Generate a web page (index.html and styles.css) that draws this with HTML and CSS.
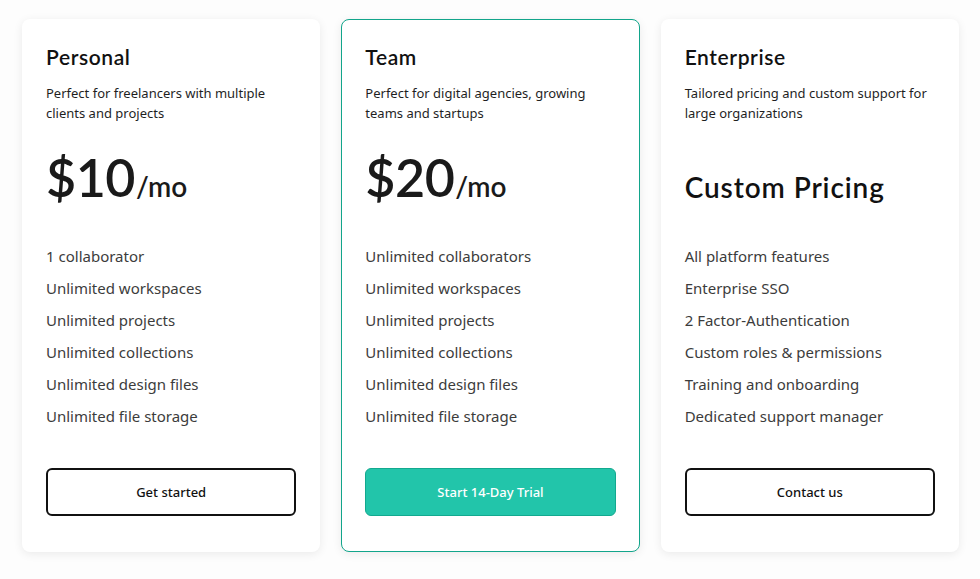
FILE: index.html
```html
<!DOCTYPE html>
<html lang="en">
<head>
<meta charset="utf-8">
<title>Pricing</title>
<link rel="stylesheet" href="styles.css">
</head>
<body>
<main class="pricing">
  <section class="card">
    <h2 class="plan-name">Personal</h2>
    <p class="plan-desc">Perfect for freelancers with multiple clients and projects</p>
    <div class="price"><span class="amount">$10</span><span class="period">/mo</span></div>
    <ul class="features">
      <li>1 collaborator</li>
      <li>Unlimited workspaces</li>
      <li>Unlimited projects</li>
      <li>Unlimited collections</li>
      <li>Unlimited design files</li>
      <li>Unlimited file storage</li>
    </ul>
    <button class="btn btn-outline">Get started</button>
  </section>
  <section class="card card-featured">
    <h2 class="plan-name">Team</h2>
    <p class="plan-desc">Perfect for digital agencies, growing teams and startups</p>
    <div class="price"><span class="amount">$20</span><span class="period">/mo</span></div>
    <ul class="features">
      <li>Unlimited collaborators</li>
      <li>Unlimited workspaces</li>
      <li>Unlimited projects</li>
      <li>Unlimited collections</li>
      <li>Unlimited design files</li>
      <li>Unlimited file storage</li>
    </ul>
    <button class="btn btn-primary">Start 14-Day Trial</button>
  </section>
  <section class="card">
    <h2 class="plan-name">Enterprise</h2>
    <p class="plan-desc">Tailored pricing and custom support for large organizations</p>
    <div class="price"><span class="custom">Custom Pricing</span></div>
    <ul class="features">
      <li>All platform features</li>
      <li>Enterprise SSO</li>
      <li>2 Factor-Authentication</li>
      <li>Custom roles &amp; permissions</li>
      <li>Training and onboarding</li>
      <li>Dedicated support manager</li>
    </ul>
    <button class="btn btn-outline">Contact us</button>
  </section>
</main>
</body>
</html>
```

FILE: styles.css
```css
* { box-sizing: border-box; }
html, body { margin: 0; padding: 0; }
body {
  background: #fdfdfd;
  font-family: "Noto Sans", "Open Sans", sans-serif;
  color: #1f1f1f;
}
.pricing {
  display: grid;
  grid-template-columns: repeat(3, 1fr);
  gap: 21px;
  padding: 19px 21px 27px 22px;
}
.card {
  background: #fff;
  border: 1px solid transparent;
  border-radius: 8px;
  box-shadow: 0 2px 10px rgba(0,0,0,0.08);
  padding: 23px 23px 35px;
  display: flex;
  flex-direction: column;
  height: 533px;
}
.card-featured {
  border-color: #12a58b;
}
.plan-name {
  margin: 0;
  font-family: "Lato", sans-serif;
  font-weight: 600;
  font-size: 21px;
  line-height: 28px;
  color: #111;
  letter-spacing: 0.6px;
}
.plan-desc {
  margin: 12px 0 0;
  font-size: 13px;
  line-height: 20px;
  color: #1f1f1f;
}
.price {
  margin-top: 26px;
  height: 56px;
  display: flex;
  align-items: baseline;
  font-family: "Lato", sans-serif;
  color: #1a1a1a;
}
.amount {
  font-size: 52px;
  line-height: 56px;
  font-weight: 600;
  letter-spacing: -0.5px;
}
.period {
  font-size: 28px;
  font-weight: 600;
  margin-left: 1px;
}
.custom {
  margin-top: 20px;
  font-size: 28px;
  line-height: 36px;
  font-weight: 600;
  letter-spacing: 0.9px;
  color: #111;
}
.features {
  list-style: none;
  margin: 35px 0 0;
  padding: 0;
  font-size: 15px;
  line-height: 32px;
  color: #3c3c3c;
}
.btn {
  margin-top: auto;
  height: 48px;
  width: 100%;
  border-radius: 6px;
  font-family: "Noto Sans", sans-serif;
  font-size: 13px;
  font-weight: 500;
  cursor: pointer;
}
.btn-outline {
  background: #fff;
  border: 2px solid #111;
  color: #111;
}
.btn-primary {
  background: #22c5aa;
  border: 1px solid #13a98f;
  color: #fff;
}
```
